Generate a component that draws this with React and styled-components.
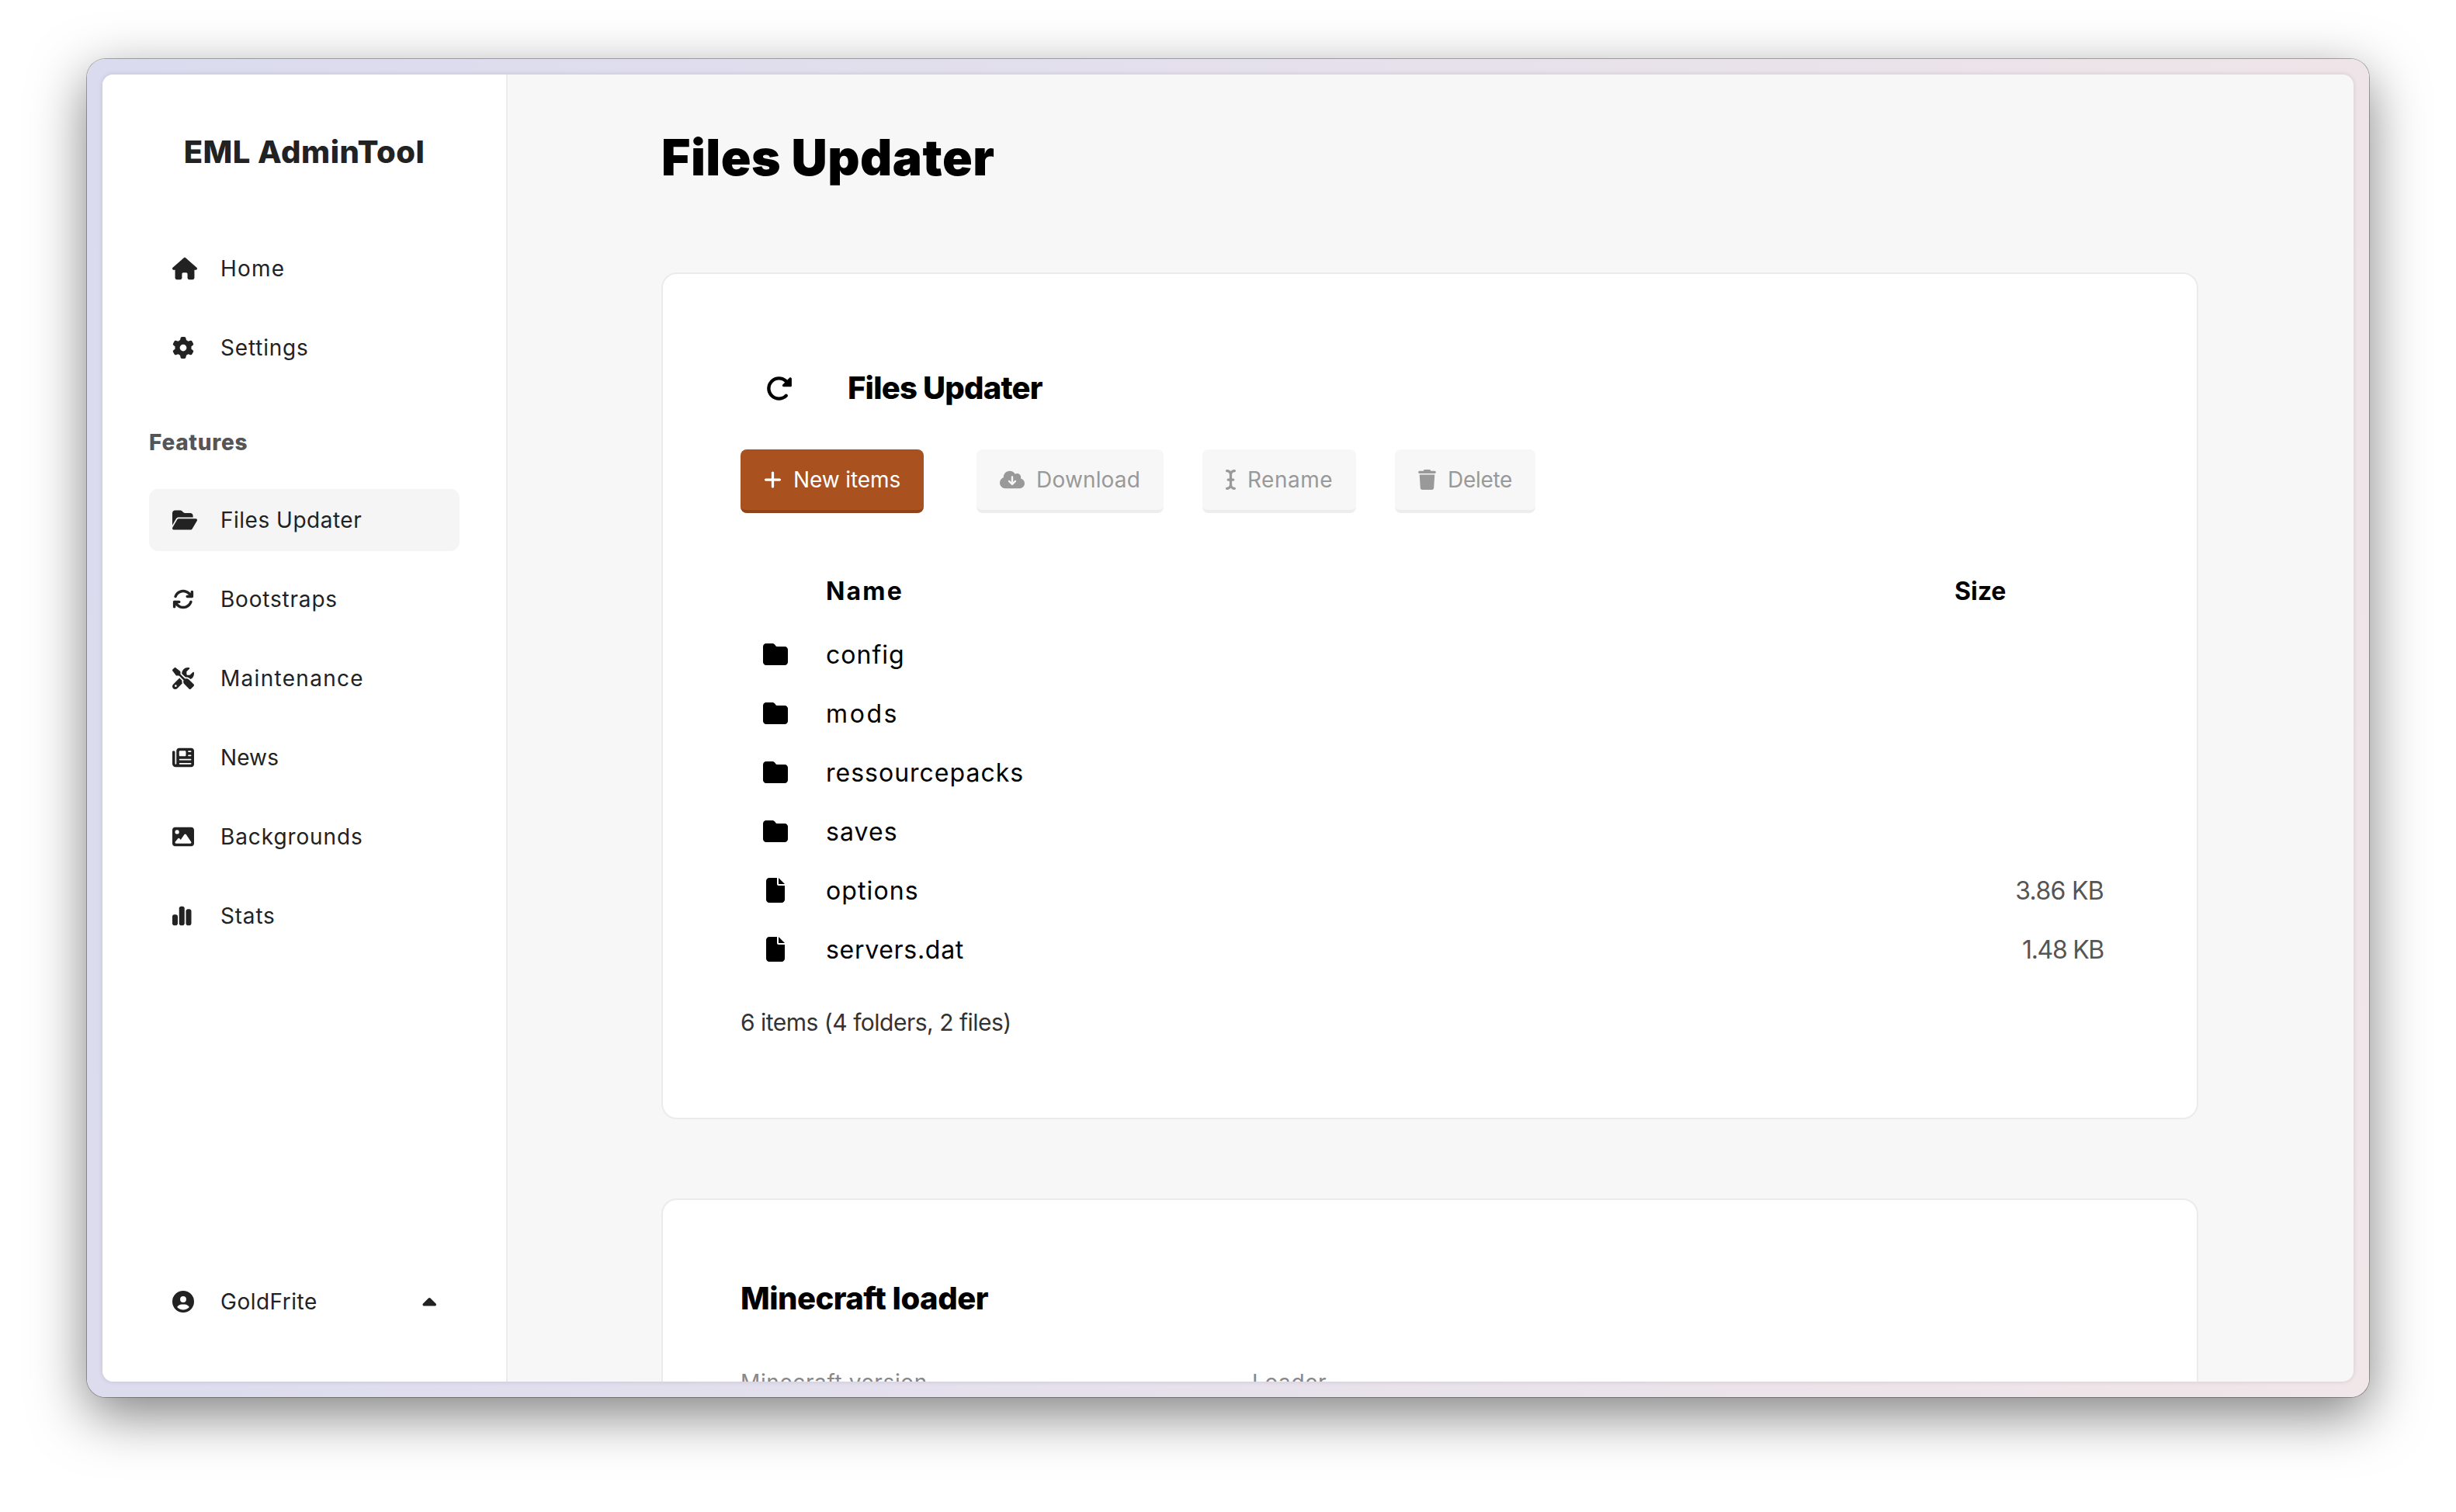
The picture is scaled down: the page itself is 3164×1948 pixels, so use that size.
import React from 'react';
import styled, { createGlobalStyle } from 'styled-components';
import {
  FaHouse, FaGear, FaFolderOpen, FaArrowsRotate, FaScrewdriverWrench, FaNewspaper, FaImage,
  FaChartSimple, FaCircleUser, FaCaretUp, FaRotateRight, FaPlus, FaCloudArrowDown, FaICursor,
  FaTrash, FaFolder, FaFile,
} from 'react-icons/fa6';

const GlobalStyle = createGlobalStyle`
  html, body {
    margin: 0;
    background: #fff;
  }
  * {
    box-sizing: border-box;
  }
  body {
    font-family: Inter, "Noto Sans", "Liberation Sans", sans-serif;
    color: #000;
  }
`;

const Page = styled.div`
  width: 3164px;
  height: 1948px;
  padding: 76px 112px 148px;
  overflow: hidden;
`;

const Frame = styled.div`
  height: 100%;
  padding: 20px;
  border-radius: 24px;
  background: linear-gradient(100deg, #dadbef, #f1e6e8);
  box-shadow: 0 0 0 1px rgba(0, 0, 0, 0.3), 0 22px 70px rgba(0, 0, 0, 0.5);
`;

const Window = styled.div`
  display: flex;
  height: 100%;
  border-radius: 14px;
  overflow: hidden;
  background: #f7f7f7;
  box-shadow: 0 0 6px rgba(0, 0, 0, 0.12);
`;

const Sidebar = styled.aside`
  display: flex;
  flex-direction: column;
  flex: 0 0 522px;
  padding: 70px 60px 63px;
  background: #fff;
  border-right: 2px solid #ebebeb;
`;

const Brand = styled.div`
  height: 60px;
  margin-bottom: 80px;
  font-size: 40px;
  line-height: 60px;
  font-weight: 800;
  letter-spacing: 0.5px;
  text-align: center;
  color: #222;
`;

const NavGroup = styled.nav`
  display: flex;
  flex-direction: column;
  gap: 22px;
`;

const NavItem = styled.div`
  display: flex;
  align-items: center;
  height: 80px;
  padding: 0 30px;
  border-radius: 12px;
  font-size: 28px;
  letter-spacing: ${(p) => p.$track ?? 0.8}px;
  color: #222;
  background: ${(p) => (p.$active ? '#f5f5f5' : 'transparent')};
`;

const NavIcon = styled.span`
  display: flex;
  flex: 0 0 62px;
  font-size: ${(p) => p.$size || 28}px;
`;

const SectionLabel = styled.div`
  height: 40px;
  margin: 62px 0 40px;
  font-size: 28px;
  line-height: 40px;
  font-weight: 800;
  letter-spacing: 0.7px;
  color: #555;
`;

const UserRow = styled(NavItem)`
  margin-top: auto;
`;

const Caret = styled.span`
  display: flex;
  margin: 4px 0 0 auto;
  font-size: 28px;
`;

const Main = styled.main`
  flex: 1;
  min-width: 0;
  padding: 67px 200px 0 198px;
`;

const PageTitle = styled.h1`
  height: 80px;
  margin: 0 0 108px;
  font-size: 64px;
  line-height: 80px;
  font-weight: 900;
  letter-spacing: 0.5px;
`;

const Card = styled.section`
  padding: 100px;
  margin-bottom: 102px;
  background: #fff;
  border: 2px solid #ebebeb;
  border-radius: 20px;
`;

const CardHeader = styled.div`
  display: flex;
  align-items: center;
  height: 94px;
  margin-bottom: 32px;
  padding-left: 32px;
`;

const RefreshIcon = styled.span`
  display: flex;
  flex: 0 0 106px;
  font-size: 35px;
`;

const CardTitle = styled.h2`
  margin: 0;
  font-size: 40px;
  line-height: 54px;
  font-weight: 800;
  letter-spacing: ${(p) => p.$track ?? -0.8}px;
`;

const Toolbar = styled.div`
  display: flex;
  margin-bottom: 62px;
`;

const ToolButton = styled.button`
  display: flex;
  align-items: center;
  gap: 15px;
  height: 82px;
  padding: 0 30px;
  margin-right: ${(p) => (p.$primary ? '68px' : '50px')};
  border: 0;
  border-bottom: 4px solid ${(p) => (p.$primary ? '#8f431a' : '#ededed')};
  border-radius: 8px;
  font-family: inherit;
  font-size: 28px;
  font-weight: 400;
  letter-spacing: ${(p) => p.$track || 0}px;
  color: ${(p) => (p.$primary ? '#fff' : '#999')};
  background: ${(p) => (p.$primary ? '#a95220' : '#f7f7f7')};
`;

const ToolIcon = styled.span`
  display: flex;

  svg {
    width: ${(p) => p.$width}px;
    height: 26px;
  }
`;

const FileRow = styled.div`
  display: grid;
  grid-template-columns: 110px 1fr 212px;
  align-items: center;
  height: 76px;
  font-size: 32px;
`;

const HeaderRow = styled(FileRow)`
  margin-bottom: 6px;
  font-weight: 700;
`;

const NameHead = styled.span`
  letter-spacing: 2.2px;
`;

const IconCell = styled.span`
  display: flex;
  justify-content: center;
  width: 90px;
  font-size: 32px;
`;

const FileName = styled.span`
  letter-spacing: ${(p) => p.$track}px;
`;

const SizeCell = styled.span`
  padding-right: 20px;
  text-align: right;
  letter-spacing: ${(p) => p.$track}px;
  color: #555;
`;

const Summary = styled.div`
  height: 42px;
  margin-top: 35px;
  margin-bottom: 2px;
  font-size: 30px;
  line-height: 42px;
  letter-spacing: -0.5px;
  color: #333;
`;

const LoaderGrid = styled.div`
  display: grid;
  grid-template-columns: repeat(3, 1fr);
  gap: 201px;
  margin-top: 61px;
`;

const FieldLabel = styled.label`
  font-size: 28px;
  line-height: 40px;
  letter-spacing: 0.6px;
  color: #888;
`;

const navTop = [
  { icon: FaHouse, label: 'Home', size: 32, track: 1.2 },
  { icon: FaGear, label: 'Settings' },
];

const navFeatures = [
  { icon: FaFolderOpen, label: 'Files Updater', size: 32, active: true, track: 0.5 },
  { icon: FaArrowsRotate, label: 'Bootstraps' },
  { icon: FaScrewdriverWrench, label: 'Maintenance', track: 1.3 },
  { icon: FaNewspaper, label: 'News', track: 0.1 },
  { icon: FaImage, label: 'Backgrounds', track: 0.9 },
  { icon: FaChartSimple, label: 'Stats' },
];

const files = [
  { icon: FaFolder, name: 'config', track: 1 },
  { icon: FaFolder, name: 'mods', track: 2.6 },
  { icon: FaFolder, name: 'ressourcepacks', track: 1 },
  { icon: FaFolder, name: 'saves', track: 1.1 },
  { icon: FaFile, name: 'options', track: 1.1, size: '3.86 KB', sizeTrack: -0.7 },
  { icon: FaFile, name: 'servers.dat', track: 0.7, size: '1.48 KB', sizeTrack: -1.3 },
];

function NavList({ items }) {
  return (
    <NavGroup>
      {items.map((item) => (
        <NavItem key={item.label} $active={item.active} $track={item.track}>
          <NavIcon $size={item.size}><item.icon preserveAspectRatio="xMinYMid" /></NavIcon>
          {item.label}
        </NavItem>
      ))}
    </NavGroup>
  );
}

export default function App() {
  return (
    <>
      <GlobalStyle />
      <Page>
        <Frame>
          <Window>
            <Sidebar>
              <Brand>EML AdminTool</Brand>
              <NavList items={navTop} />
              <SectionLabel>Features</SectionLabel>
              <NavList items={navFeatures} />
              <UserRow $track={0.5}>
                <NavIcon><FaCircleUser /></NavIcon>
                GoldFrite
                <Caret><FaCaretUp preserveAspectRatio="xMaxYMid" /></Caret>
              </UserRow>
            </Sidebar>
            <Main>
              <PageTitle>Files Updater</PageTitle>
              <Card>
                <CardHeader>
                  <RefreshIcon><FaRotateRight /></RefreshIcon>
                  <CardTitle>Files Updater</CardTitle>
                </CardHeader>
                <Toolbar>
                  <ToolButton $primary $track={-0.1}><ToolIcon $width={23}><FaPlus /></ToolIcon>New items</ToolButton>
                  <ToolButton disabled $track={0.15}><ToolIcon $width={32}><FaCloudArrowDown /></ToolIcon>Download</ToolButton>
                  <ToolButton disabled $track={0.5}><ToolIcon $width={13}><FaICursor /></ToolIcon>Rename</ToolButton>
                  <ToolButton disabled $track={-0.3}><ToolIcon $width={23}><FaTrash /></ToolIcon>Delete</ToolButton>
                </Toolbar>
                <HeaderRow>
                  <span />
                  <NameHead>Name</NameHead>
                  <span>Size</span>
                </HeaderRow>
                {files.map((file) => (
                  <FileRow key={file.name}>
                    <IconCell><file.icon /></IconCell>
                    <FileName $track={file.track}>{file.name}</FileName>
                    <SizeCell $track={file.sizeTrack}>{file.size}</SizeCell>
                  </FileRow>
                ))}
                <Summary>6 items (4 folders, 2 files)</Summary>
              </Card>
              <Card>
                <CardTitle $track={-0.5}>Minecraft loader</CardTitle>
                <LoaderGrid>
                  <FieldLabel>Minecraft version</FieldLabel>
                  <FieldLabel>Loader</FieldLabel>
                </LoaderGrid>
              </Card>
            </Main>
          </Window>
        </Frame>
      </Page>
    </>
  );
}
